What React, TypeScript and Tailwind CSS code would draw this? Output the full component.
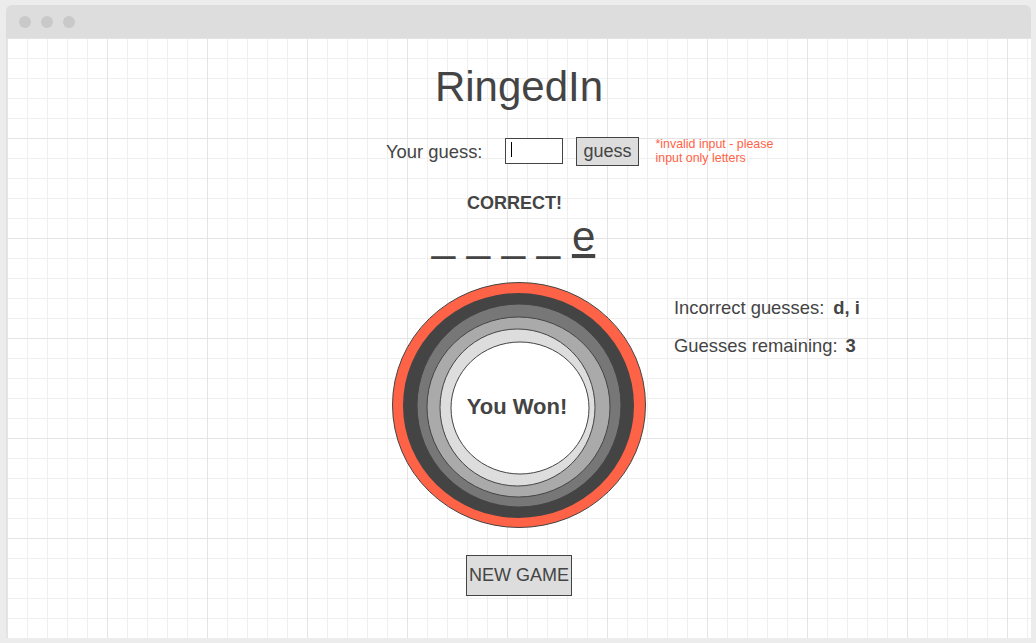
const TOMATO = '#ff6347'

function TitleBar() {
  return (
    <div className="h-[33px] bg-[#dddddd] rounded-t-[6px] flex items-center gap-[10px] pl-[13px]">
      <span className="w-[12px] h-[12px] rounded-full bg-[#c9c9c9]" />
      <span className="w-[12px] h-[12px] rounded-full bg-[#c9c9c9]" />
      <span className="w-[12px] h-[12px] rounded-full bg-[#c9c9c9]" />
    </div>
  )
}

function Rings() {
  return (
    <div className="relative w-[254px] h-[247px]">
      <svg width="254" height="247" viewBox="0 0 254 247" className="block">
        <ellipse cx="127" cy="123" rx="126.5" ry="122.5" fill={TOMATO} stroke="#444" strokeWidth="1" />
        <ellipse cx="126.5" cy="123.5" rx="115.5" ry="112.5" fill="#444444" />
        <ellipse cx="127" cy="123.5" rx="102" ry="101.5" fill="#777777" stroke="#444" strokeWidth="1" />
        <ellipse cx="126.5" cy="125" rx="91.5" ry="90" fill="#aaaaaa" stroke="#444" strokeWidth="1" />
        <ellipse cx="125.5" cy="125.5" rx="77.5" ry="78.5" fill="#dddddd" stroke="#444" strokeWidth="1" />
        <ellipse cx="128" cy="126" rx="69" ry="66" fill="#ffffff" stroke="#444" strokeWidth="1" />
      </svg>
      <div className="absolute inset-0 flex items-center justify-center pt-[2px] pr-[4px]">
        <span className="text-[22px] leading-none font-bold text-[#444]">You Won!</span>
      </div>
    </div>
  )
}

export default function App() {
  return (
    <div className="w-[1036px] h-[643px] bg-[#ececec] pt-[5px] pl-[6px] font-['Liberation_Sans',Arial,sans-serif]">
      <div className="w-[1025px] h-[633px] flex flex-col">
        <TitleBar />
        <main className="flex-1 border-l border-[#e2e2e2] bg-white bg-[linear-gradient(to_right,#e4e4e4_1px,transparent_1px),linear-gradient(to_bottom,#e4e4e4_1px,transparent_1px),linear-gradient(to_right,#efefef_1px,transparent_1px),linear-gradient(to_bottom,#efefef_1px,transparent_1px)] bg-[size:100px_100px,100px_100px,20px_20px,20px_20px] flex flex-col items-center text-[#444]">
          <h1 className="pt-[25px] text-[42px] leading-[48px] font-normal">RingedIn</h1>

          <div className="self-stretch mt-[26px] h-[29px] flex items-start pl-[379px]">
            <label className="text-[18.4px] leading-[29px]">Your guess:</label>
            <div className="ml-[23px] mt-[1px] w-[58px] h-[26px] border border-[#444] bg-white pl-[5px] pt-[3px]">
              <div className="w-[1px] h-[15px] bg-black" />
            </div>
            <button className="ml-[13px] h-[29px] px-[6px] border border-[#444] bg-[#dddddd] text-[18px] leading-[27px] text-[#444]">
              guess
            </button>
            <p className="ml-[17px] mt-[1px] w-[128px] text-[12.4px] leading-[13.5px] text-[#ff6347]">
              *invalid input - please input only letters
            </p>
          </div>

          <p className="mt-[28px] pr-[9px] text-[18px] leading-[19px] font-bold">CORRECT!</p>
          <p className="pr-[11px] text-[42px] leading-[48px] whitespace-pre">
            {'_ _ _ _ '}
            <span className="underline">e</span>
          </p>

          <div className="mt-[21px] w-full grid grid-cols-[1fr_auto_1fr]">
            <div />
            <Rings />
            <div className="pl-[28px] pt-[16px] flex flex-col gap-[18px] text-[18.4px] leading-[20px]">
              <div className="flex gap-[9px]">
                <span>Incorrect guesses:</span>
                <span className="font-bold">d, i</span>
              </div>
              <div className="flex gap-[8px]">
                <span>Guesses remaining:</span>
                <span className="font-bold">3</span>
              </div>
            </div>
          </div>

          <button className="mt-[26px] px-[2px] py-[9px] border border-[#444] bg-[#dddddd] text-[18px] leading-[21px] text-[#444]">
            NEW GAME
          </button>
        </main>
      </div>
    </div>
  )
}
